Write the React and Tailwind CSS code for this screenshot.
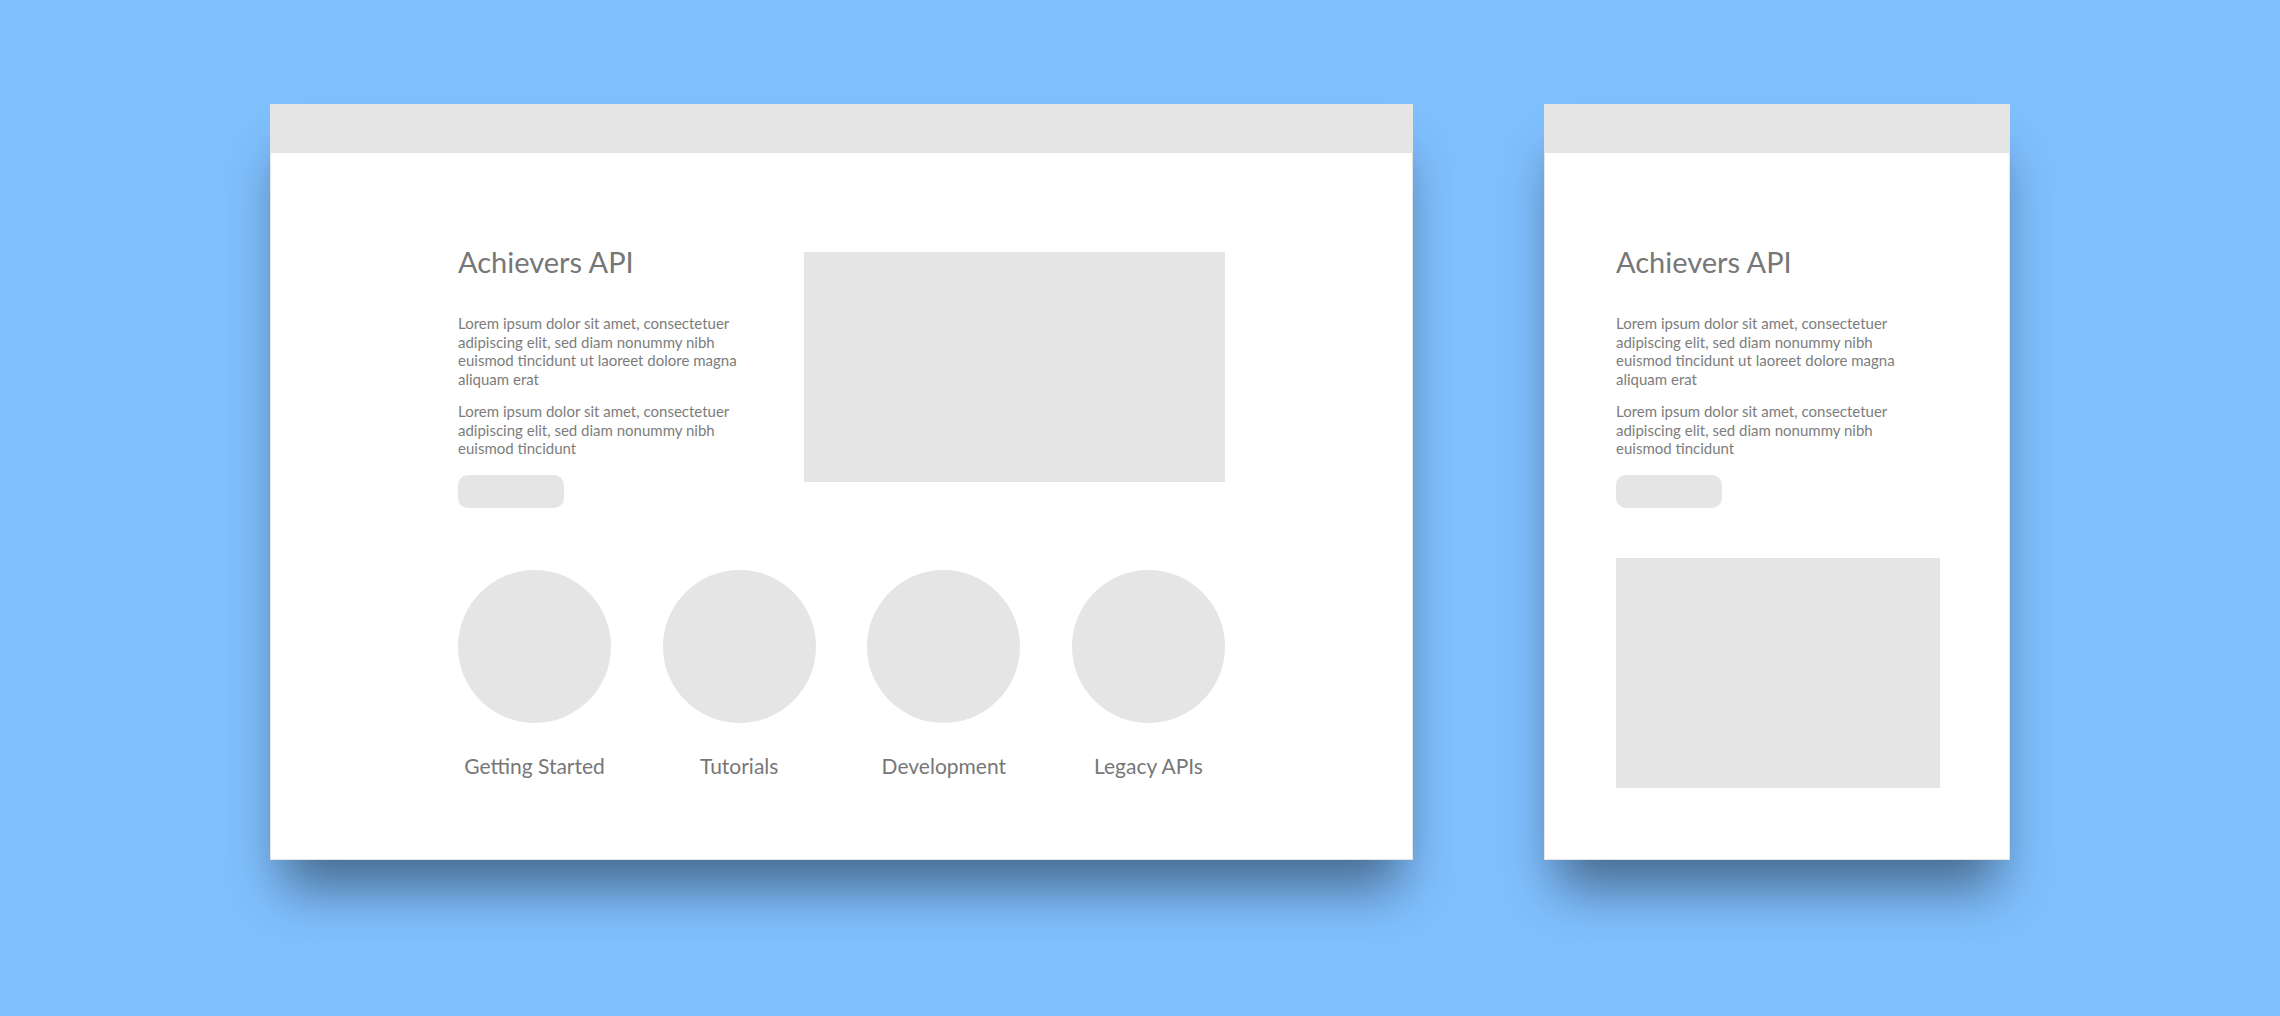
const font = { fontFamily: "Lato, 'Open Sans', sans-serif" };

const Intro = () => (
  <div className="w-[300px] shrink-0">
    <h1 className="text-[29px] leading-[34px] font-normal text-[#777777]">Achievers API</h1>
    <p className="mt-[35px] text-[15px] leading-[18.5px] text-[#7d7d7d]">
      Lorem ipsum dolor sit amet, consectetuer adipiscing elit, sed diam nonummy nibh euismod tincidunt ut
      laoreet dolore magna aliquam erat
    </p>
    <p className="mt-[14px] text-[15px] leading-[18.5px] text-[#7d7d7d]">
      Lorem ipsum dolor sit amet, consectetuer adipiscing elit, sed diam nonummy nibh euismod tincidunt
    </p>
    <div className="mt-[17px] w-[106px] h-[33px] rounded-[10px] bg-[#e5e5e5]" />
  </div>
);

const links = ["Getting Started", "Tutorials", "Development", "Legacy APIs"];

const Window = ({ className, children }) => (
  <div
    className={`bg-white border border-[#e4e4e4] shadow-[0_40px_50px_-12px_rgba(0,0,0,0.45)] ${className}`}
  >
    <div className="h-[48px] bg-[#e5e5e5]" />
    {children}
  </div>
);

export default function App() {
  return (
    <div className="min-h-[1016px] bg-[#80c0ff] flex justify-center items-start gap-[131px] pt-[104px]" style={font}>
      <Window className="w-[1143px]">
        <div className="w-[767px] mx-auto pt-[92px] pb-[81px]">
          <div className="flex items-start justify-between">
            <Intro />
            <div className="mt-[7px] w-[421px] h-[230px] bg-[#e5e5e5]" />
          </div>
          <div className="mt-[62px] flex justify-between">
            {links.map((l) => (
              <div key={l} className="w-[153px] flex flex-col items-center">
                <div className="w-[153px] h-[153px] rounded-full bg-[#e5e5e5]" />
                <span className="mt-[31px] text-[21px] leading-[24px] text-[#777777] whitespace-nowrap">{l}</span>
              </div>
            ))}
          </div>
        </div>
      </Window>

      <Window className="w-[466px]">
        <div className="px-[71px] pt-[92px] pb-[71px]">
          <Intro />
          <div className="mt-[50px] w-[324px] h-[230px] bg-[#e5e5e5]" />
        </div>
      </Window>
    </div>
  );
}
